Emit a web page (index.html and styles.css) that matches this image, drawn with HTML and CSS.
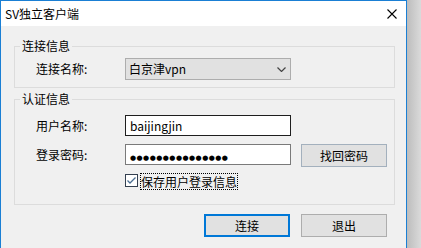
FILE: index.html
```html
<!DOCTYPE html>
<html lang="zh-CN">
<head>
  <meta charset="UTF-8">
  <title>SV独立客户端</title>
  <link rel="stylesheet" href="styles.css">
</head>
<body>
  <div class="window">
    <div class="titlebar">
      <span class="title">SV独立客户端</span>
      <svg class="close" width="10" height="10" viewBox="0 0 10 10">
        <path d="M0.5 0.5 L9.5 9.5 M9.5 0.5 L0.5 9.5" stroke="#000" stroke-width="1.1" fill="none"/>
      </svg>
    </div>
    <div class="dialog">
      <!-- 连接信息 -->
      <fieldset class="group group-conn">
        <legend>连接信息</legend>
        <div class="row">
          <label class="row-label">连接名称:</label>
          <div class="combo">
            <span>白京津vpn</span>
            <svg class="arrow" width="9" height="5" viewBox="0 0 9 5">
              <path d="M0.5 0.5 L4.5 4.5 L8.5 0.5" stroke="#444" stroke-width="1.2" fill="none"/>
            </svg>
          </div>
        </div>
      </fieldset>
      <!-- 认证信息 -->
      <fieldset class="group group-auth">
        <legend>认证信息</legend>
        <div class="row">
          <label class="row-label">用户名称:</label>
          <div class="field field-active">baijingjin</div>
        </div>
        <div class="row row-pass">
          <label class="row-label">登录密码:</label>
          <div class="field"><span class="dots">●●●●●●●●●●●●●●●</span></div>
          <button class="btn btn-find">找回密码</button>
        </div>
        <div class="row row-check">
          <span class="check">
            <svg width="13" height="13" viewBox="0 0 13 13">
              <rect x="0.5" y="0.5" width="12" height="12" fill="#fff" stroke="#333f4f"/>
              <path d="M2.5 6.5 L5 9 L10.5 3.5" stroke="#4a6d91" stroke-width="1.3" fill="none"/>
            </svg>
          </span>
          <span class="check-label">保存用户登录信息</span>
        </div>
      </fieldset>
      <div class="actions">
        <button class="btn btn-default">连接</button>
        <button class="btn">退出</button>
      </div>
    </div>
  </div>
</body>
</html>
```

FILE: styles.css
```css
/* Page and window frame */
html, body {
  margin: 0;
  height: 100%;
  overflow: hidden;
}
body {
  font-family: "Noto Sans CJK SC", "Noto Sans", sans-serif;
  font-size: 12px;
  color: #000;
  background: linear-gradient(to right, #bdbdbd, #dadada 14px, #e4e4e4);
  background-position: 407px 0;
  background-repeat: no-repeat;
  background-color: #e4e4e4;
}
.window {
  width: 405px;
  height: 247px;
  border: 1px solid #1a7fd4;
  border-bottom: none;
  background: #f0f0f0;
}
/* Title bar */
.titlebar {
  height: 25px;
  background: #fff;
  display: flex;
  align-items: center;
  justify-content: space-between;
  padding: 0 9px 0 4px;
}
.title {
  line-height: 25px;
}
.close {
  display: block;
  margin-top: 1px;
}
/* Dialog body */
.dialog {
  padding: 12px 11px 0 13px;
}
.group {
  margin: 0;
  padding: 0 0 0 5px;
  border: 1px solid #dcdcdc;
  width: 374px;
}
.group legend {
  padding: 0 2px;
  line-height: 16px;
}
.group-conn {
  padding-top: 4px;
  padding-bottom: 7px;
}
.group-auth {
  margin-top: 3px;
  padding-top: 8px;
  padding-bottom: 14px;
}
.row {
  display: flex;
  align-items: flex-start;
}
.row-label {
  width: 89px;
  padding-left: 16px;
  line-height: 22px;
}
.combo {
  width: 166px;
  height: 22px;
  box-sizing: border-box;
  border: 1px solid #adadad;
  background: #e1e1e1;
  display: flex;
  align-items: center;
  justify-content: space-between;
  padding: 0 4px 0 3px;
}
.combo span {
  line-height: 20px;
}
.arrow {
  display: block;
}
.field {
  border: 1px solid #7a7a7a;
  background: #fff;
  padding: 0 0 0 4px;
  box-sizing: border-box;
  width: 166px;
  height: 21px;
  line-height: 19px;
}
.field-active {
  border-color: #1e1e1e;
}
.row-pass {
  margin-top: 7px;
}
.row-pass .row-label {
  line-height: 21px;
}
.dots {
  font-family: "DejaVu Sans", sans-serif;
  font-size: 7px;
  letter-spacing: 0.45px;
}
/* Buttons */
.btn {
  font-family: inherit;
  font-size: 12px;
  width: 86px;
  height: 23px;
  margin: 0;
  padding: 0;
  background: #e1e1e1;
  border: 1px solid #adadad;
  color: #000;
}
.btn-find {
  margin-left: 10px;
  border-color: #a3b0bd;
}
.btn-default {
  border: 2px solid #0078d7;
}
.row-check {
  margin-top: 6px;
  padding-left: 105px;
}
.check svg {
  display: block;
  margin-top: 1px;
}
.check-label {
  margin-left: 2px;
  border: 1px dotted #000;
  line-height: 15px;
}
.actions {
  display: flex;
  justify-content: flex-end;
  gap: 11px;
  margin-top: 9px;
  padding-right: 8px;
}
```
